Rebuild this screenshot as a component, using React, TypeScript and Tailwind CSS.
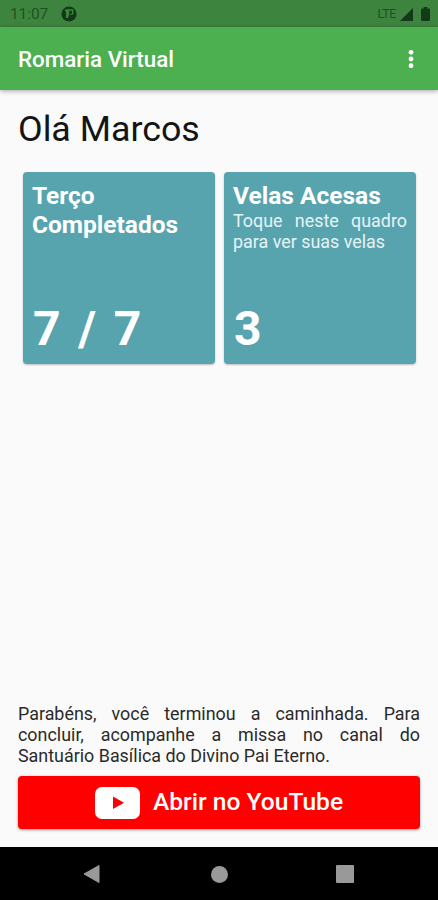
import type { ReactNode } from "react";

function StatusBar() {
  return (
    <div className="flex h-[27px] items-center justify-between bg-[#3d853f] pl-[10px] pr-[8px] text-[#1d5221]">
      <div className="flex items-center gap-[13px]">
        <span className="pt-[2px] text-[15.5px] leading-none tracking-[-0.1px]">11:07</span>
        <svg width="16" height="16" viewBox="0 0 16 16" className="mt-px">
          <circle cx="8" cy="8" r="7.6" fill="#14381a" />
          <path d="M3.6 4.6 5 3.2h7.4v4.6l-1 1H9v-1h2V4.8H8.2v3.6L6.8 12H5V6z" fill="#3d853f" />
        </svg>
      </div>
      <div className="flex items-center">
        <span className="mr-[4px] pt-[2px] text-[12.5px] leading-none tracking-[-0.4px]">LTE</span>
        <svg width="13" height="13" viewBox="0 0 13 13" className="mr-[8px] mt-px">
          <path d="M13 0v13H0z" fill="#14381a" />
        </svg>
        <svg width="9" height="14" viewBox="0 0 9 14" className="mt-px">
          <path d="M2.6 0h3.8v1.4H8a1 1 0 0 1 1 1V13a1 1 0 0 1-1 1H1a1 1 0 0 1-1-1V2.4a1 1 0 0 1 1-1h1.6z" fill="#14381a" />
        </svg>
      </div>
    </div>
  );
}

function AppBar() {
  return (
    <header className="z-10 flex h-[63px] items-center justify-between bg-[#4caf50] pl-[18px] pr-[24px] shadow-[0_1px_5px_rgba(0,0,0,0.35)]">
      <h1 className="pt-[2px] text-[22.4px] font-medium leading-none text-white">Romaria Virtual</h1>
      <button aria-label="Menu">
        <svg width="6" height="20" viewBox="0 0 6 20" fill="#fff">
          <circle cx="3" cy="3.3" r="2.4" />
          <circle cx="3" cy="10" r="2.4" />
          <circle cx="3" cy="16.7" r="2.4" />
        </svg>
      </button>
    </header>
  );
}

function Card({ title, value, children }: { title: string; value: string; children?: ReactNode }) {
  return (
    <div className="flex h-[192px] w-[192px] flex-col justify-between rounded-[4px] bg-[#58a4ae] pb-[8px] pl-[9px] pr-[9px] pt-[9px] text-white shadow-[0_1px_2px_rgba(0,0,0,0.25)]">
      <div>
        <h3 className="text-[24.5px] font-bold leading-[29px]">{title}</h3>
        {children}
      </div>
      <p className="pl-px text-[48px] font-bold leading-[54px] tracking-[1.6px] [word-spacing:2.6px]">{value}</p>
    </div>
  );
}

function NavBar() {
  return (
    <nav className="flex h-[53px] items-center bg-black pl-[83px] pt-px text-[#999999]">
      <svg width="17" height="20" viewBox="0 0 17 20" fill="currentColor">
        <path d="M16 1.5v17L1 10z" stroke="currentColor" strokeLinejoin="round" />
      </svg>
      <svg width="17" height="17" viewBox="0 0 17 17" fill="currentColor" className="ml-[111px]">
        <circle cx="8.5" cy="8.5" r="8.5" />
      </svg>
      <svg width="18" height="18" viewBox="0 0 18 18" fill="currentColor" className="ml-[108px]">
        <rect width="18" height="18" rx="1" />
      </svg>
    </nav>
  );
}

export default function App() {
  return (
    <div className="flex h-screen w-full flex-col overflow-hidden bg-[#fafafa] font-['Roboto',sans-serif]">
      <StatusBar />
      <AppBar />
      <main className="flex flex-1 flex-col px-[18px] pb-[18px] pt-[18px]">
        <h2 className="text-[35.8px] leading-[42px] text-[#141414]">Olá Marcos</h2>
        <div className="ml-[5px] mt-[22px] flex gap-[9px]">
          <Card title="Terço Completados" value="7 / 7" />
          <Card title="Velas Acesas" value="3">
            <p className="text-justify text-[17.9px] leading-[21px] text-[#e6f3f5]">
              Toque neste quadro para ver suas velas
            </p>
          </Card>
        </div>
        <div className="mt-auto">
          <p className="text-justify text-[17.9px] leading-[21px] text-[#2a2a2a]">
            Parabéns, você terminou a caminhada. Para concluir, acompanhe a missa no canal do
            Santuário Basílica do Divino Pai Eterno.
          </p>
          <button className="mt-[10px] flex h-[53px] w-full items-center justify-center gap-[13px] rounded-[4px] bg-[#fe0000] shadow-[0_1px_3px_rgba(0,0,0,0.4)]">
            <svg width="45" height="32" viewBox="0 0 45 32">
              <rect width="45" height="32" rx="7" fill="#fff" />
              <path d="M18 9.5v12.5l11-6.3z" fill="#fe0000" />
            </svg>
            <span className="text-[24.6px] font-medium leading-none text-white">Abrir no YouTube</span>
          </button>
        </div>
      </main>
      <NavBar />
    </div>
  );
}
